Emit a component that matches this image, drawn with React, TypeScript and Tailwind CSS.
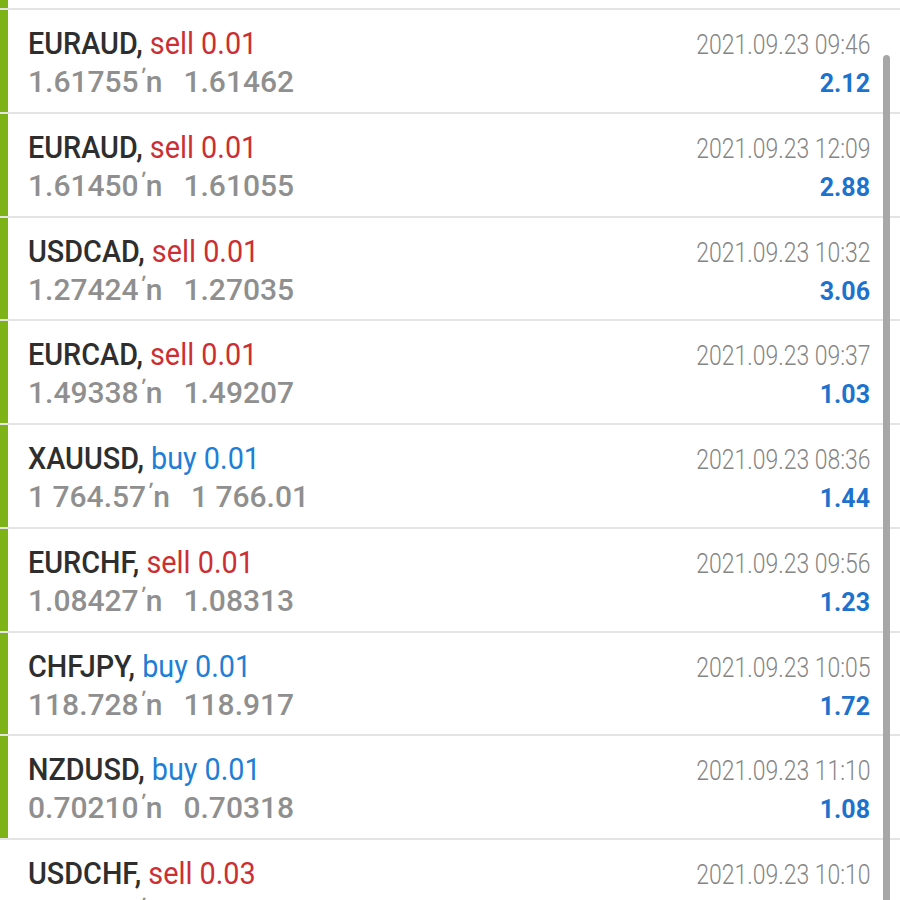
import React from "react";

type Trade = {
  sym: string;
  side: "sell" | "buy";
  lot: string;
  open: string;
  close: string;
  time: string;
  profit: string;
  bar: boolean;
};

const trades: Trade[] = [
  { sym: "EURAUD", side: "sell", lot: "0.01", open: "1.61755", close: "1.61462", time: "2021.09.23 09:46", profit: "2.12", bar: true },
  { sym: "EURAUD", side: "sell", lot: "0.01", open: "1.61450", close: "1.61055", time: "2021.09.23 12:09", profit: "2.88", bar: true },
  { sym: "USDCAD", side: "sell", lot: "0.01", open: "1.27424", close: "1.27035", time: "2021.09.23 10:32", profit: "3.06", bar: true },
  { sym: "EURCAD", side: "sell", lot: "0.01", open: "1.49338", close: "1.49207", time: "2021.09.23 09:37", profit: "1.03", bar: true },
  { sym: "XAUUSD", side: "buy", lot: "0.01", open: "1 764.57", close: "1 766.01", time: "2021.09.23 08:36", profit: "1.44", bar: true },
  { sym: "EURCHF", side: "sell", lot: "0.01", open: "1.08427", close: "1.08313", time: "2021.09.23 09:56", profit: "1.23", bar: true },
  { sym: "CHFJPY", side: "buy", lot: "0.01", open: "118.728", close: "118.917", time: "2021.09.23 10:05", profit: "1.72", bar: true },
  { sym: "NZDUSD", side: "buy", lot: "0.01", open: "0.70210", close: "0.70318", time: "2021.09.23 11:10", profit: "1.08", bar: true },
  { sym: "USDCHF", side: "sell", lot: "0.03", open: "0.92417", close: "0.92283", time: "2021.09.23 10:10", profit: "1.50", bar: false },
];

const font = { fontFamily: "Roboto, 'Noto Sans', sans-serif" };

function Row({ t }: { t: Trade }) {
  return (
    <div className="flex h-[103.75px] shrink-0 border-b-2 border-[#e4e4e4]">
      <div className={t.bar ? "w-2 shrink-0 bg-[#7db317]" : "w-2 shrink-0"} />
      <div className="flex flex-1 flex-col pl-[20px] pr-[30px] pt-[15px]">
        <div className="flex items-baseline justify-between leading-[36px]">
          <span className="inline-block origin-left scale-x-[0.9] whitespace-nowrap text-[32px] font-medium text-[#2e2e2e]">
            {t.sym},{" "}
            <span className={t.side === "sell" ? "font-normal text-[#cc2f33]" : "font-normal text-[#1f7fd6]"}>
              {t.side} {t.lot}
            </span>
          </span>
          <span className="inline-block origin-right scale-x-[0.82] whitespace-nowrap text-[28px] font-light text-[#858585]">
            {t.time}
          </span>
        </div>
        <div className="flex items-baseline justify-between leading-[38px]">
          <span className="whitespace-nowrap text-[30px] font-medium text-[#8f8f8f]">
            {t.open}
            <span className="ml-[3px] mr-[21px]">
              <span className="relative -top-[9px] text-[22px]">ʹ</span>n
            </span>
            {t.close}
          </span>
          <span className="whitespace-nowrap text-[25px] font-bold text-[#1c72cc]">{t.profit}</span>
        </div>
      </div>
    </div>
  );
}

export default function App() {
  return (
    <div className="relative h-[900px] w-[900px] overflow-hidden bg-white" style={font}>
      <div className="flex flex-col">
        <div className="flex h-[10px] shrink-0 border-b-2 border-[#e4e4e4]">
          <div className="w-2 bg-[#7db317]" />
        </div>
        {trades.map((t, i) => (
          <Row key={i} t={t} />
        ))}
      </div>
      <div className="absolute right-[10px] top-[55px] h-[860px] w-[7px] rounded-t-sm bg-[#a7a7a7]" />
    </div>
  );
}
